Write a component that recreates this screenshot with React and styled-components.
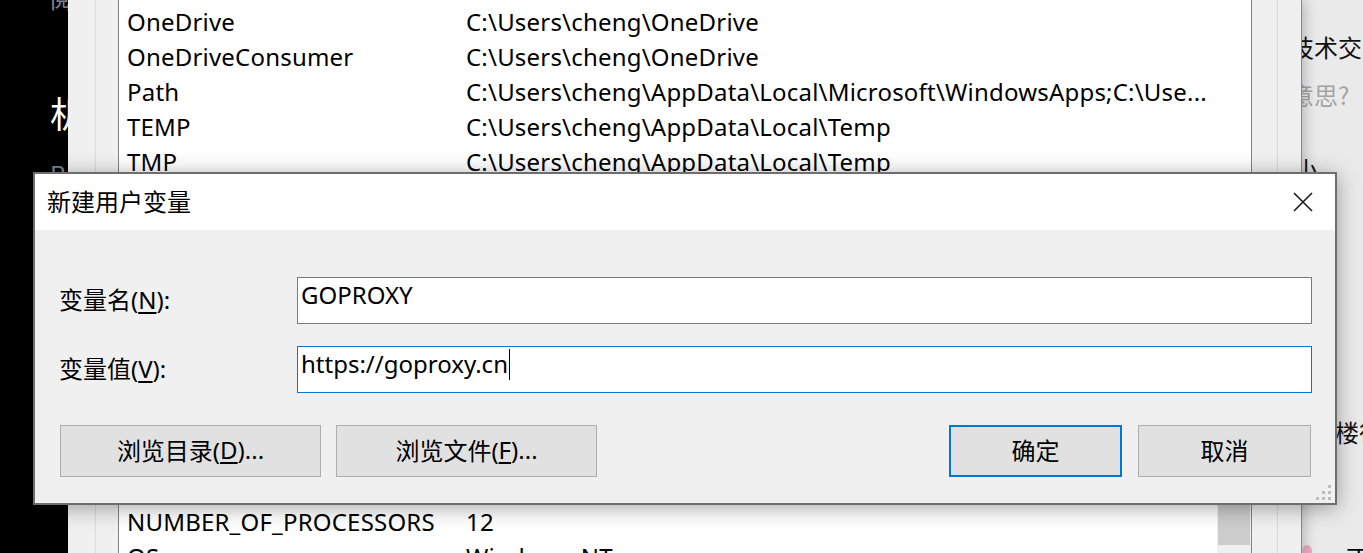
import React from "react";
import styled, { createGlobalStyle } from "styled-components";

const topRows = [
  ["GOPATH", ""],
  ["OneDrive", "C:\\Users\\cheng\\OneDrive"],
  ["OneDriveConsumer", "C:\\Users\\cheng\\OneDrive"],
  ["Path", "C:\\Users\\cheng\\AppData\\Local\\Microsoft\\WindowsApps;C:\\Use..."],
  ["TEMP", "C:\\Users\\cheng\\AppData\\Local\\Temp"],
  ["TMP", "C:\\Users\\cheng\\AppData\\Local\\Temp"],
];

const bottomRows = [
  ["ComSpec", "C:\\WINDOWS\\system32\\cmd.exe"],
  ["DriverData", "C:\\Windows\\System32\\Drivers\\DriverData"],
  ["NUMBER_OF_PROCESSORS", "12"],
  ["OS", "Windows_NT"],
];

export default function App() {
  return (
    <>
      <GlobalStyle />
      <Screen>
        <DarkSide>
          <SideText $size={24} $color="#7f8794" $top={-14}>阅读</SideText>
          <SideText $size={36} $color="#ffffff" $top={84}>机器</SideText>
          <SideText $size={24} $color="#7f8794" $top={32}>R</SideText>
        </DarkSide>

        <EnvWindow>
          <EnvPane>
            <VarList $top={-32}>
              <Rows>
                {topRows.map(([name, value]) => (
                  <Row key={name}>
                    <span>{name}</span>
                    <span>{value}</span>
                  </Row>
                ))}
              </Rows>
            </VarList>
            <VarList>
              <Rows>
                {bottomRows.map(([name, value]) => (
                  <Row key={name}>
                    <span>{name}</span>
                    <span>{value}</span>
                  </Row>
                ))}
              </Rows>
              <ScrollTrack>
                <ScrollThumb />
              </ScrollTrack>
            </VarList>
          </EnvPane>
        </EnvWindow>

        <WebPage>
          <PageText $top={35} $shift={-12}>技术交流</PageText>
          <PageText $top={24} $shift={-12} $color="#a3a3a3">意思?</PageText>
          <PageText $top={50} $shift={-8}>小</PageText>
          <PageText $top={239} $shift={33}>楼征</PageText>
          <PageFoot>
            <PinkDot />
            <span>一丁</span>
          </PageFoot>
        </WebPage>

        <Dialog>
          <TitleBar>
            <span>新建用户变量</span>
            <svg width="20" height="20" viewBox="0 0 20 20">
              <path d="M1 1 L19 19 M19 1 L1 19" stroke="#1a1a1a" strokeWidth="1.6" fill="none" />
            </svg>
          </TitleBar>
          <Body>
            <Field>
              <Label>
                变量名(<u>N</u>):
              </Label>
              <TextBox>GOPROXY</TextBox>
            </Field>
            <Field $gap={22}>
              <Label>
                变量值(<u>V</u>):
              </Label>
              <TextBox $focused>
                https://goproxy.cn
                <Caret />
              </TextBox>
            </Field>
            <Buttons>
              <Group>
                <Button $w={261}>
                  浏览目录(<u>D</u>)...
                </Button>
                <Button $w={261}>
                  浏览文件(<u>F</u>)...
                </Button>
              </Group>
              <Group $gap={16}>
                <Button $w={173} $primary>
                  确定
                </Button>
                <Button $w={173}>取消</Button>
              </Group>
            </Buttons>
          </Body>
          <Grip width="16" height="16" viewBox="0 0 16 16">
            <rect x="12" y="0" width="3" height="3" fill="#bdbdbd" />
            <rect x="6" y="6" width="3" height="3" fill="#bdbdbd" />
            <rect x="12" y="6" width="3" height="3" fill="#bdbdbd" />
            <rect x="0" y="12" width="3" height="3" fill="#bdbdbd" />
            <rect x="6" y="12" width="3" height="3" fill="#bdbdbd" />
            <rect x="12" y="12" width="3" height="3" fill="#bdbdbd" />
          </Grip>
        </Dialog>
      </Screen>
    </>
  );
}

const GlobalStyle = createGlobalStyle`
  html, body {
    margin: 0;
    padding: 0;
  }
  body {
    width: 1363px;
    height: 553px;
    overflow: hidden;
    background: #000;
    font-family: "Noto Sans", "Noto Sans CJK SC", sans-serif;
    color: #000;
  }
  u {
    text-underline-offset: 3px;
  }
`;

const Screen = styled.div`
  position: relative;
  display: flex;
  width: 1363px;
  height: 553px;
  overflow: hidden;
`;

const DarkSide = styled.div`
  width: 68px;
  flex-shrink: 0;
  background: #000;
  display: flex;
  flex-direction: column;
  padding-left: 50px;
  box-sizing: border-box;
  overflow: hidden;
`;

const SideText = styled.div`
  font-family: "Noto Sans CJK SC", sans-serif;
  font-size: ${(p) => p.$size}px;
  line-height: 1;
  color: ${(p) => p.$color};
  margin-top: ${(p) => p.$top}px;
  white-space: nowrap;
`;

const EnvWindow = styled.div`
  position: relative;
  z-index: 1;
  width: 1234px;
  flex-shrink: 0;
  box-sizing: border-box;
  background: #f0f0f0;
  border-right: 1px solid #8a8a8a;
  padding: 0 23px 0 27px;
  box-shadow: 3px 0 12px rgba(0, 0, 0, 0.22);
`;

const EnvPane = styled.div`
  height: 575px;
  display: flex;
  flex-direction: column;
  justify-content: space-between;
  border-left: 1px solid #dadada;
  border-right: 1px solid #dadada;
  padding: 0 25px 0 22px;
`;

const VarList = styled.div`
  display: flex;
  margin-top: ${(p) => p.$top || 0}px;
  background: #fff;
  border: 1px solid #828282;
`;

const Rows = styled.div`
  flex: 1;
  min-width: 0;
`;

const Row = styled.div`
  display: grid;
  grid-template-columns: 339px 1fr;
  height: 35px;
  padding-left: 8px;
  font-size: 24px;
  line-height: 35px;
  letter-spacing: 0.2px;
  white-space: nowrap;
  overflow: hidden;
`;

const ScrollTrack = styled.div`
  width: 34px;
  background: #f0f0f0;
  padding: 0 1px;
  box-sizing: border-box;
`;

const ScrollThumb = styled.div`
  height: 111px;
  background: #cdcdcd;
`;

const WebPage = styled.div`
  flex: 1;
  background: #ebeaea;
  overflow: hidden;
  display: flex;
  flex-direction: column;
`;

const PageText = styled.div`
  font-family: "Noto Sans CJK SC", sans-serif;
  font-size: 24px;
  line-height: 1;
  color: ${(p) => p.$color || "#111"};
  margin-top: ${(p) => p.$top}px;
  margin-left: ${(p) => p.$shift}px;
  white-space: nowrap;
`;

const PageFoot = styled.div`
  display: flex;
  align-items: flex-start;
  gap: 10px;
  margin-top: 101px;
  font-family: "Noto Sans CJK SC", sans-serif;
  font-size: 24px;
  line-height: 1;
  white-space: nowrap;
`;

const PinkDot = styled.div`
  width: 10px;
  height: 12px;
  border-radius: 50%;
  background: #e6a9bb;
  flex-shrink: 0;
`;

const Dialog = styled.div`
  position: absolute;
  z-index: 2;
  left: 33px;
  top: 172px;
  width: 1304px;
  height: 333px;
  box-sizing: border-box;
  border: 2px solid #6e6e6e;
  background: #f0f0f0;
  display: flex;
  flex-direction: column;
  box-shadow: 0 3px 20px rgba(0, 0, 0, 0.35);
  font-family: "Noto Sans", "Noto Sans CJK SC", sans-serif;
  font-size: 24px;
`;

const TitleBar = styled.div`
  height: 56px;
  flex-shrink: 0;
  box-sizing: border-box;
  background: #fff;
  display: flex;
  align-items: center;
  justify-content: space-between;
  padding: 0 22px 4px 12px;
  font-family: "Noto Sans CJK SC", sans-serif;

  svg {
    margin-top: 4px;
  }
`;

const Body = styled.div`
  flex: 1;
  display: flex;
  flex-direction: column;
  padding: 47px 23px 0 24px;
`;

const Field = styled.div`
  display: flex;
  align-items: center;
  height: 47px;
  margin-top: ${(p) => p.$gap || 0}px;
`;

const Label = styled.div`
  width: 238px;
  flex-shrink: 0;
  padding-bottom: 4px;
  white-space: nowrap;
`;

const TextBox = styled.div`
  flex: 1;
  height: 47px;
  box-sizing: border-box;
  background: #fff;
  border: 1px solid ${(p) => (p.$focused ? "#0078d7" : "#7a7a7a")};
  padding: 2px 0 0 3px;
  line-height: 30px;
  white-space: nowrap;
`;

const Caret = styled.span`
  display: inline-block;
  width: 0;
  height: 31px;
  border-left: 1px solid #000;
  vertical-align: -7px;
  margin-left: 1px;
`;

const Buttons = styled.div`
  display: flex;
  justify-content: space-between;
  margin-top: 32px;
  padding: 0 1px;
`;

const Group = styled.div`
  display: flex;
  gap: ${(p) => p.$gap || 15}px;
`;

const Button = styled.div`
  width: ${(p) => p.$w}px;
  height: 52px;
  box-sizing: border-box;
  display: flex;
  align-items: center;
  justify-content: center;
  padding-bottom: 4px;
  background: #e1e1e1;
  border: ${(p) => (p.$primary ? "2px solid #0078d7" : "1px solid #adadad")};
  white-space: nowrap;
`;

const Grip = styled.svg`
  position: absolute;
  left: 1281px;
  top: 311px;
`;
